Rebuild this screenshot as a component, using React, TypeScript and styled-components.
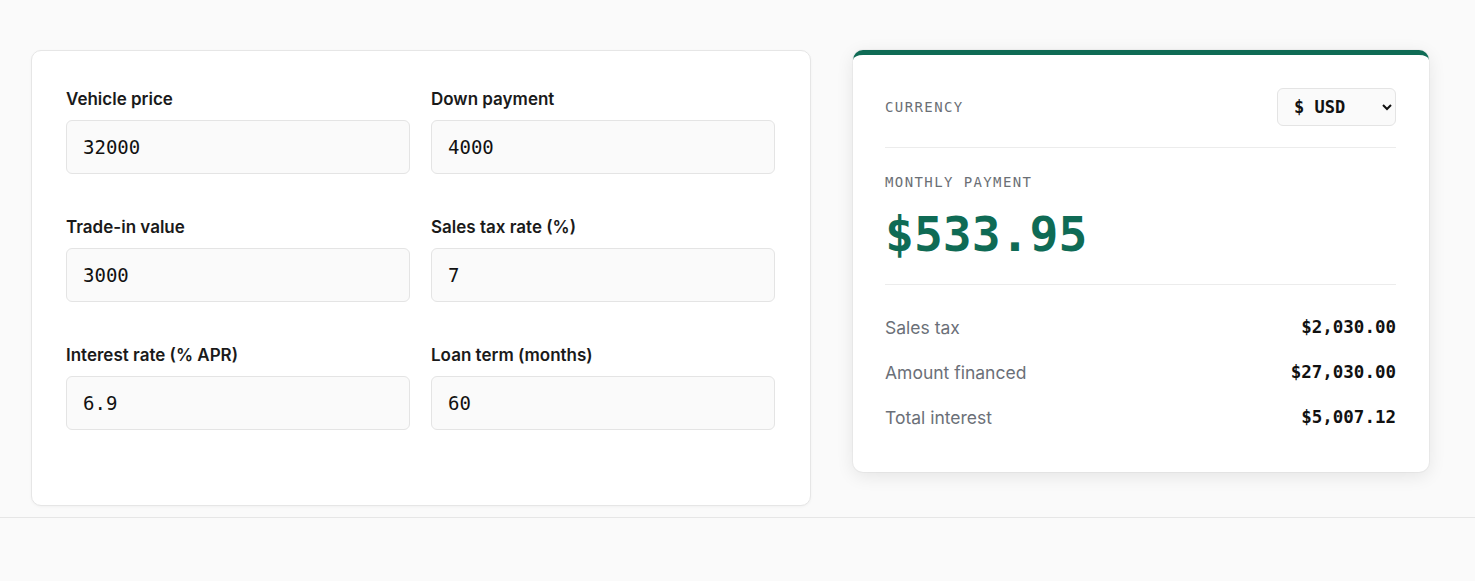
import React, { useState } from 'react';
import styled, { createGlobalStyle } from 'styled-components';

const GlobalStyle = createGlobalStyle`
  html, body {
    margin: 0;
    padding: 0;
    background: #fafafa;
    font-family: Inter, "Liberation Sans", sans-serif;
    color: #1a1a1a;
  }
`;

const mono = `"DejaVu Sans Mono", "Liberation Mono", monospace`;
const green = '#0f6b55';

const Page = styled.div`
  min-height: 581px;
  display: flex;
  flex-direction: column;
`;

const Main = styled.main`
  display: flex;
  align-items: flex-start;
  gap: 42px;
  padding: 50px 0 11px 31px;
`;

const FormCard = styled.section`
  width: 780px;
  box-sizing: border-box;
  background: #fff;
  border: 1px solid #e6e6e6;
  border-radius: 10px;
  box-shadow: 0 1px 3px rgba(0, 0, 0, 0.04);
  padding: 36px 35px 75px 34px;
`;

const FieldGrid = styled.div`
  display: grid;
  grid-template-columns: 1fr 1fr;
  column-gap: 21px;
  row-gap: 41px;
`;

const Field = styled.label`
  display: flex;
  flex-direction: column;
  gap: 9px;
`;

const Label = styled.span`
  font-size: 17px;
  font-weight: 600;
  line-height: 24px;
  color: #1a1a1a;
`;

const Input = styled.input`
  box-sizing: border-box;
  height: 54px;
  width: 100%;
  padding: 0 16px;
  background: #fafafa;
  border: 1px solid #e4e4e4;
  border-radius: 6px;
  font-family: ${mono};
  font-size: 19px;
  font-weight: 500;
  color: #111;
  outline: none;
`;

const ResultCard = styled.aside`
  width: 576px;
  box-sizing: border-box;
  background: #fff;
  border-top: 5px solid ${green};
  border-radius: 10px;
  box-shadow: 0 4px 18px rgba(0, 0, 0, 0.09), 0 0 0 1px rgba(0, 0, 0, 0.03);
  padding: 33px 33px 42px 32px;
`;

const CurrencyRow = styled.div`
  display: flex;
  align-items: center;
  justify-content: space-between;
  padding-bottom: 21px;
  border-bottom: 1px solid #ececec;
`;

const Caption = styled.div`
  font-family: ${mono};
  font-size: 14px;
  letter-spacing: 0.1em;
  text-transform: uppercase;
  color: #6b6f75;
  line-height: 20px;
`;

const Select = styled.select`
  box-sizing: border-box;
  width: 119px;
  height: 38px;
  padding: 0 8px 0 12px;
  background: #fafafa;
  border: 1px solid #e4e4e4;
  border-radius: 6px;
  font-family: ${mono};
  font-size: 17px;
  font-weight: 700;
  color: #111;
  outline: none;
`;

const PaymentBlock = styled.div`
  padding: 24px 0 22px;
  border-bottom: 1px solid #ececec;
  display: flex;
  flex-direction: column;
  gap: 14px;
`;

const BigAmount = styled.div`
  font-family: ${mono};
  font-size: 48px;
  font-weight: 700;
  line-height: 56px;
  color: ${green};
`;

const Breakdown = styled.div`
  display: flex;
  flex-direction: column;
  gap: 20px;
  padding-top: 30px;
`;

const Row = styled.div`
  display: flex;
  justify-content: space-between;
  align-items: center;
  line-height: 25px;
`;

const RowLabel = styled.span`
  font-size: 17.5px;
  color: #6b7078;
`;

const RowValue = styled.span`
  font-family: ${mono};
  font-size: 17.5px;
  font-weight: 700;
  color: #111;
`;

const Footer = styled.footer`
  flex: 1;
  border-top: 1px solid #e6e6e6;
  background: #fafafa;
`;

const fields = [
  { key: 'price', label: 'Vehicle price', value: '32000' },
  { key: 'down', label: 'Down payment', value: '4000' },
  { key: 'trade', label: 'Trade-in value', value: '3000' },
  { key: 'tax', label: 'Sales tax rate (%)', value: '7' },
  { key: 'rate', label: 'Interest rate (% APR)', value: '6.9' },
  { key: 'term', label: 'Loan term (months)', value: '60' },
];

const rows = [
  { label: 'Sales tax', value: '$2,030.00' },
  { label: 'Amount financed', value: '$27,030.00' },
  { label: 'Total interest', value: '$5,007.12' },
];

export default function App() {
  const [values, setValues] = useState<Record<string, string>>(
    Object.fromEntries(fields.map((f) => [f.key, f.value])),
  );

  return (
    <Page>
      <GlobalStyle />
      <Main>
        <FormCard>
          <FieldGrid>
            {fields.map((f) => (
              <Field key={f.key}>
                <Label>{f.label}</Label>
                <Input
                  value={values[f.key]}
                  onChange={(e) =>
                    setValues({ ...values, [f.key]: e.target.value })
                  }
                />
              </Field>
            ))}
          </FieldGrid>
        </FormCard>

        <ResultCard>
          <CurrencyRow>
            <Caption>Currency</Caption>
            <Select defaultValue="USD">
              <option value="USD">$ USD</option>
              <option value="EUR">€ EUR</option>
              <option value="GBP">£ GBP</option>
            </Select>
          </CurrencyRow>
          <PaymentBlock>
            <Caption>Monthly payment</Caption>
            <BigAmount>$533.95</BigAmount>
          </PaymentBlock>
          <Breakdown>
            {rows.map((r) => (
              <Row key={r.label}>
                <RowLabel>{r.label}</RowLabel>
                <RowValue>{r.value}</RowValue>
              </Row>
            ))}
          </Breakdown>
        </ResultCard>
      </Main>
      <Footer />
    </Page>
  );
}
